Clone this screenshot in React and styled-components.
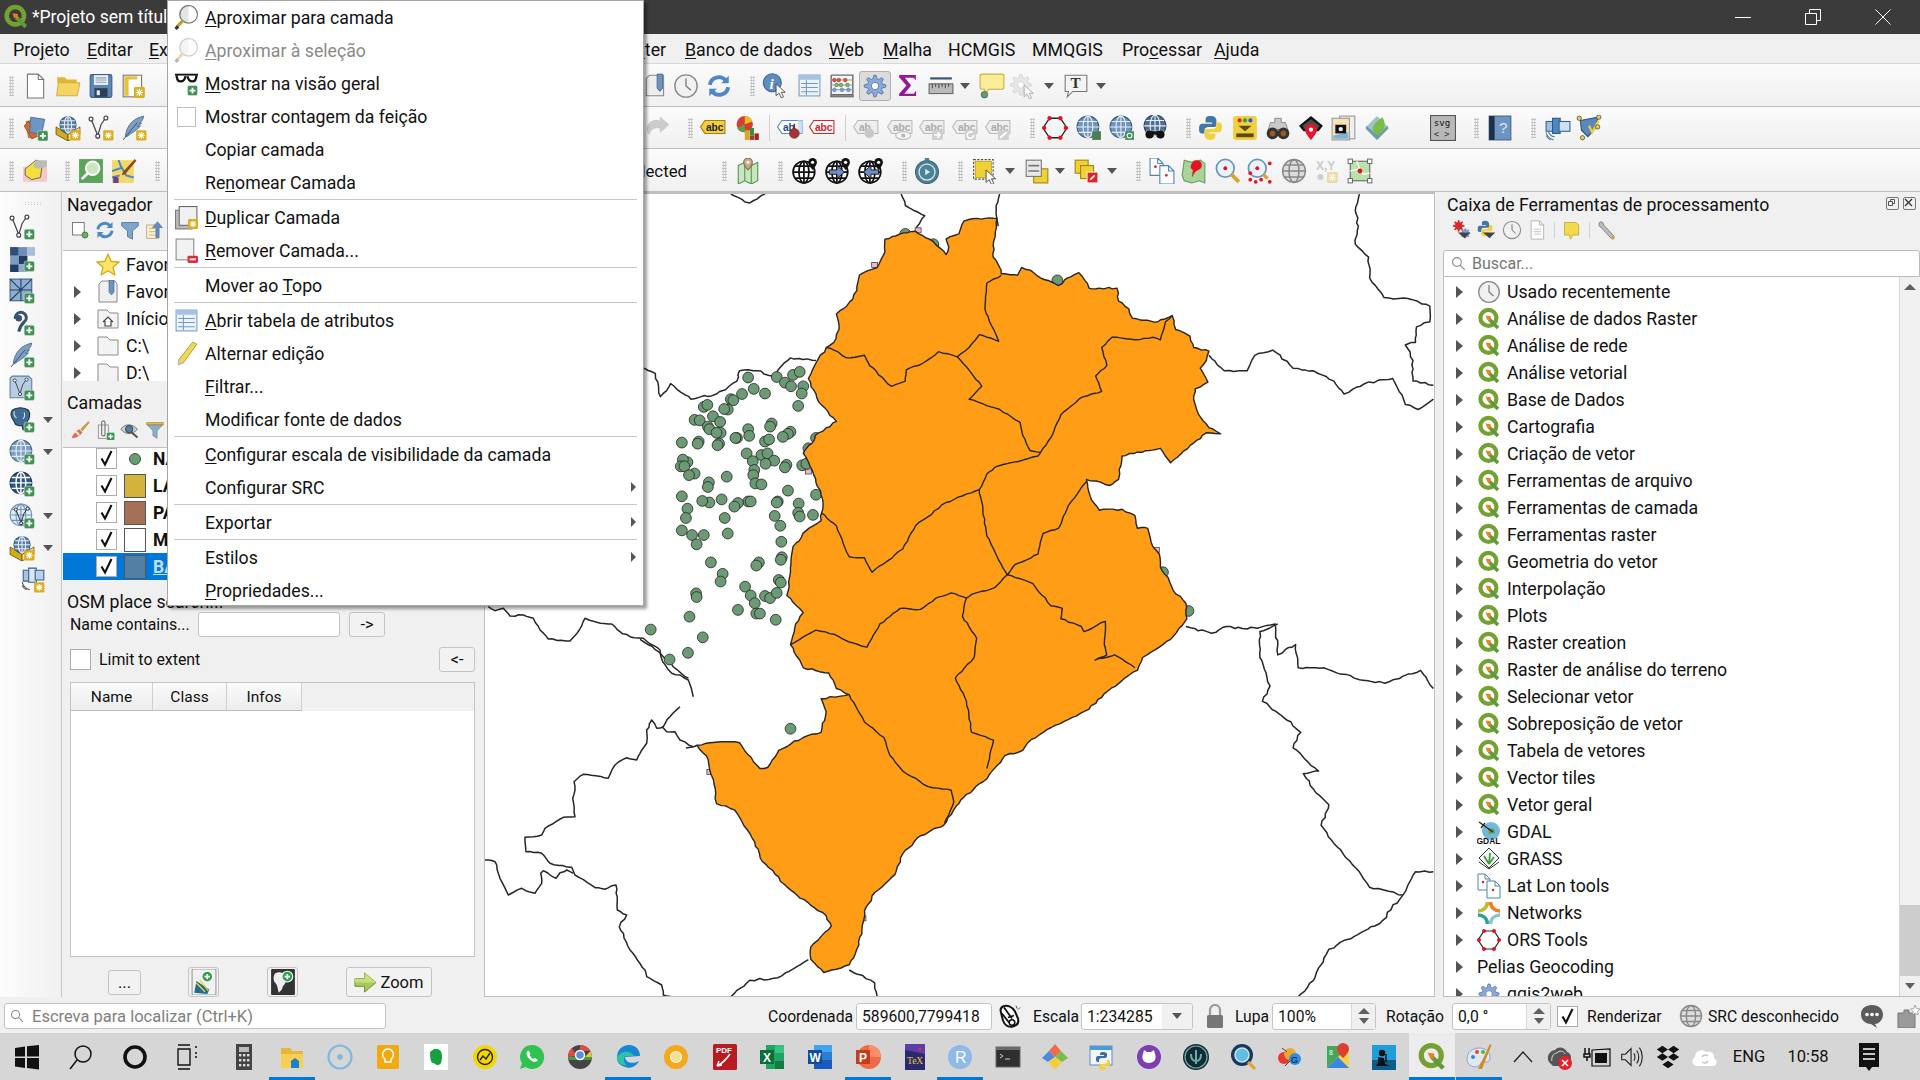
import React from 'react';
import styled, { createGlobalStyle } from 'styled-components';

const FONT = 'Roboto, "Noto Sans", Arial, sans-serif';
const Global = createGlobalStyle`
  html, body { margin: 0; padding: 0; background: #f0f0f0; }
  body { font-family: ${FONT}; font-size: 17.7px; color: #111; overflow: hidden; }
  u { text-underline-offset: 2px; text-decoration-thickness: 1px; }
`;

/* ---------- small svg parts ---------- */
const Plus = ({ x = 14, y = 14 }) => (
  <g>
    <rect x={x} y={y} width="9.5" height="9.5" rx="1.6" fill="#3f9156" stroke="#d9e9dc" strokeWidth=".5" />
    <path d={`M${x + 4.75} ${y + 2}v5.5M${x + 2} ${y + 4.75}h5.5`} stroke="#fff" strokeWidth="1.7" />
  </g>
);
const Ast = ({ x = 14, y = 14, s = 9.5 }) => (
  <g>
    <rect x={x} y={y} width={s} height={s} rx="1.2" fill="#dcae1e" />
    <path d={`M${x + s / 2} ${y + 1.6}v${s - 3.2}M${x + 1.6} ${y + s / 2}h${s - 3.2}M${x + 2.4} ${y + 2.4}l${s - 4.8} ${s - 4.8}M${x + s - 2.4} ${y + 2.4}l${-s + 4.8} ${s - 4.8}`} stroke="#fff" strokeWidth="1" />
  </g>
);
const Globe = ({ cx = 11, cy = 11, r = 9, fill = '#5b83ad', line = '#e8eef5', edge = '#3a5a7c', w = 1 }) => (
  <g>
    <circle cx={cx} cy={cy} r={r} fill={fill} stroke={edge} strokeWidth="1" />
    <ellipse cx={cx} cy={cy} rx={r * 0.45} ry={r} fill="none" stroke={line} strokeWidth={w} />
    <path d={`M${cx} ${cy - r}v${2 * r}M${cx - r} ${cy}h${2 * r}M${cx - r * 0.85} ${cy - r * 0.5}h${1.7 * r}M${cx - r * 0.85} ${cy + r * 0.5}h${1.7 * r}`} stroke={line} strokeWidth={w} fill="none" />
  </g>
);
const gearPath = (cx, cy, r1, r2, n = 8) => {
  let d = '';
  for (let i = 0; i < n * 4; i++) {
    const a = (i / (n * 4)) * Math.PI * 2 - Math.PI / (n * 4);
    const r = i % 4 === 0 || i % 4 === 1 ? r2 : r1;
    d += `${i ? 'L' : 'M'}${(cx + r * Math.cos(a)).toFixed(2)} ${(cy + r * Math.sin(a)).toFixed(2)}`;
  }
  return d + 'Z';
};
const Gear = ({ cx = 12, cy = 12, r1 = 7.5, r2 = 10.5, fill = '#8aa9d6', stroke = '#4d73ad', hole = 3.4 }) => (
  <g>
    <path d={gearPath(cx, cy, r1, r2)} fill={fill} stroke={stroke} strokeWidth=".8" strokeLinejoin="round" />
    <circle cx={cx} cy={cy} r={hole} fill="#fff" stroke={stroke} strokeWidth=".8" />
  </g>
);
const Qlogo = () => (
  <g>
    <circle cx="11.4" cy="10.8" r="8" fill="none" stroke="#75a133" strokeWidth="4.2" />
    <path d="M12 12l9 9" stroke="#5f9a3a" strokeWidth="3.6" />
    <path d="M8.6 8.6l5.2 .6-.6 5.2-1.6-2.2-1.1 1z" fill="#ef7d1a" />
  </g>
);
const Magnifier = ({ dim }) => (
  <g opacity={dim ? 0.35 : 1}>
    <circle cx="14" cy="9" r="8.400" fill="#e4e4e4" stroke="#777" strokeWidth="1.300" />
    <path d="M14 1.200a7.800 7.800 0 0 1 0 15.600z" fill="#fff" />
    <path d="M8.500 15L2.400 21.400" stroke="#c79a2e" strokeWidth="3" />
    <path d="M1.500 23l2.500-2.500" stroke="#333" strokeWidth="3" />
  </g>
);
const Page = ({ x = 5, y = 2, w = 14, h = 20, fill = '#fff', stroke = '#777' }) => (
  <path d={`M${x} ${y}h${w - 5}l5 5v${h - 5}h${-w}z M${x + w - 5} ${y}v5h5`} fill={fill} stroke={stroke} strokeWidth="1" strokeLinejoin="round" />
);
const ArrowRefresh = () => (
  <g fill="none" stroke="#4d86c9" strokeWidth="3.6">
    <path d="M3.5 11A8.5 8.5 0 0 1 18 6.5" />
    <path d="M20.5 13A8.5 8.5 0 0 1 6 17.5" />
    <path d="M21 2.5v7h-7z" fill="#4d86c9" stroke="none" />
    <path d="M3 21.5v-7h7z" fill="#4d86c9" stroke="none" />
  </g>
);
const LabelTag = ({ fill = '#f2cf3c', edge = '#a37f12', color = '#222', text = 'abc', opacity = 1 }) => (
  <g opacity={opacity}>
    <path d="M4.5 5H23V17H4.5L.5 11z" fill={fill} stroke={edge} strokeWidth="1" />
    <text x="5.5" y="15" fontFamily="Liberation Sans, sans-serif" fontWeight="700" fontSize="9.4" fill={color}>{text}</text>
  </g>
);
const Cursor = ({ x = 13, y = 11, s = 1 }) => (
  <path transform={`translate(${x} ${y}) scale(${s})`} d="M0 0l0 11 2.8-2.4 2 4.4 2-1-2-4.2h3.6z" fill="#fff" stroke="#444" strokeWidth=".8" />
);
const Vshape = ({ c = '#444' }) => (
  <g fill="none" stroke={c} strokeWidth="1.1">
    <path d="M3 4l6 15 3-10 4-6" />
    <circle cx="2.8" cy="3.8" r="1.8" fill="#fff" />
    <circle cx="9" cy="19.5" r="1.8" fill="#fff" />
    <circle cx="16.5" cy="2.8" r="1.8" fill="#fff" />
  </g>
);
const Feather = () => (
  <g>
    <path d="M21 1C12 3 5 9 4 20l2-.5C9 17 14 15 18 10l-3 .5 4-3-2 .3C19 6 20.5 4 21 1z" fill="#7d9fc2" stroke="#4a6d91" strokeWidth=".8" />
    <path d="M2 23L15 7" stroke="#33536f" strokeWidth=".9" />
  </g>
);
const Cube = () => (
  <g>
    <path d="M1 11l11 7v6L1 18z" fill="#d4ab1d" stroke="#6b5709" strokeWidth=".8" />
    <path d="M23 11l-11 7v6l11-6z" fill="#f0e38a" stroke="#6b5709" strokeWidth=".8" />
    <Globe cx={12} cy={9} r={7.5} fill="#5a7fa8" />
  </g>
);
const FolderGray = () => <path d="M2 3h9l3 3h8v15H2z" fill="#f3f3f3" stroke="#8c8c8c" />;
const Checker = () => (
  <g>
    {[[1, 1, '#2f4f7a'], [9, 1, '#6f8fb8'], [1, 9, '#7d9cc3'], [9, 9, '#223d60'], [17, 1, '#a9bdd6'], [1, 17, '#233f64'], [9, 17, '#8da8c9']].map(([x, y, c]) => (
      <rect key={`${x}${y}`} x={x} y={y} width="8" height="8" fill={c} />
    ))}
  </g>
);
function GlobeBlack() {
  return (
    <g fill="none" stroke="#111" strokeWidth="1.6">
      <circle cx="11" cy="13" r="10" fill="#fff" />
      <ellipse cx="11" cy="13" rx="4.6" ry="10" />
      <path d="M1 13h20M3 7.500h16M3 18.500h16M11 3v20" />
    </g>
  );
}
function Pin() {
  return (
    <g>
      <path d="M19 0a4 4 0 0 1 4 4c0 3-4 7-4 7s-4-4-4-7a4 4 0 0 1 4-4z" fill="#111" />
      <circle cx="19" cy="4" r="1.500" fill="#fff" />
    </g>
  );
}
const ico = {
  new: <Page x={5} y={1} w={15} h={22} />,
  open: (
    <g>
      <path d="M2 4h7l2 2h9v3H2z" fill="#e3b431" />
      <path d="M3 9h20l-2.5 12H1.5z" fill="#f4d564" stroke="#cfa52d" strokeWidth=".8" />
    </g>
  ),
  save: (
    <g>
      <rect x="2" y="1.5" width="20" height="21" rx="1.5" fill="#5c86b5" stroke="#3d6089" />
      <rect x="5.5" y="2" width="13" height="9" fill="#eef1f5" />
      <path d="M7 4.5h10M7 6.5h10M7 8.5h10" stroke="#8a9fb8" />
      <rect x="6" y="14" width="12" height="8" fill="#2d3f55" />
      <rect x="8" y="16" width="3" height="4.5" fill="#dfe6ee" />
    </g>
  ),
  layout: (
    <g>
      <rect x="2" y="2" width="17" height="20" fill="#fff" stroke="#777" />
      <path d="M3 3h12v3h-8v15H3z" fill="#e5c23d" />
      <Ast x={12} y={13} s={10} />
    </g>
  ),
  mark: (
    <g>
      <path d="M3 5l3-3h13v19H3z" fill="#eee" stroke="#888" />
      <path d="M13 1h5v13l-2.5 3-2.5-3z" fill="#6d92bd" stroke="#3f6288" strokeWidth=".7" />
    </g>
  ),
  clock: (
    <g>
      <circle cx="12" cy="12" r="10.3" fill="#f1f1f1" stroke="#8a8a8a" strokeWidth="1.3" />
      <path d="M12 5v7l4.5 4" fill="none" stroke="#777" strokeWidth="1.2" />
    </g>
  ),
  refresh: <ArrowRefresh />,
  identify: (
    <g>
      <circle cx="9.5" cy="9" r="8.3" fill="#5f8cc0" stroke="#3c6595" />
      <text x="7" y="14.5" fontFamily="Liberation Serif, serif" fontStyle="italic" fontWeight="700" fontSize="14" fill="#fff">i</text>
      <Cursor x={13} y={10} />
    </g>
  ),
  table: (
    <g>
      <rect x="2" y="2" width="20" height="20" fill="#eef3fa" stroke="#6f9ac9" />
      <rect x="2" y="2" width="20" height="4.5" fill="#a6c3e2" />
      <path d="M4 10h16M4 14h16M4 18h16M9 7v14" stroke="#6f9ac9" />
    </g>
  ),
  abacus: (
    <g fill="none">
      <path d="M2 2h20v19M2 2v19M2 20h20" stroke="#6b6b6b" strokeWidth="1.3" />
      <rect x="1" y="20.5" width="22" height="2" fill="#777" />
      <path d="M2 6.5h20M2 11h20M2 15.5h20" stroke="#999" />
      {[5, 9, 15].map((x) => <circle key={x} cx={x} cy="6.5" r="1.7" fill="#d9534f" stroke="#963a37" strokeWidth=".5" />)}
      {[7, 11, 17].map((x) => <circle key={x} cx={x} cy="11" r="1.7" fill="#7fb46a" stroke="#4a7d35" strokeWidth=".5" />)}
      {[5, 12, 18].map((x) => <circle key={x} cx={x} cy="15.5" r="1.7" fill="#7fa4d3" stroke="#44709f" strokeWidth=".5" />)}
    </g>
  ),
  gear: <Gear cx={12} cy={12} r1={6.8} r2={10} />,
  sigma: <path d="M4 2h16v5l-2.2-2.5H9.5l6 7.5-6.5 8h9l2.3-3v5H4v-2l7-8-7-8z" fill="#96189a" />,
  ruler: (
    <g>
      <path d="M2 5h20" stroke="#35567c" strokeWidth="2" />
      <rect x="1" y="10" width="22" height="9" fill="#bbb" stroke="#666" />
      <path d="M4 10v4M7 10v3M10 10v4M13 10v3M16 10v4M19 10v3" stroke="#555" />
    </g>
  ),
  tip: (
    <g>
      <path d="M3 1h18a2 2 0 0 1 2 2v10a2 2 0 0 1-2 2H9l-3 4-1-4H3a2 2 0 0 1-2-2V3a2 2 0 0 1 2-2z" fill="#faed99" stroke="#c9ae43" />
      <circle cx="5" cy="20" r="3" fill="#6b9a75" stroke="#3d5e44" strokeWidth=".7" />
    </g>
  ),
  ggear: (
    <g opacity=".45">
      <Gear cx={11} cy={11} r1={6.6} r2={9.6} fill="#d5d5d5" stroke="#aaa" hole={3.2} />
      <Cursor x={14} y={11} />
    </g>
  ),
  tbubble: (
    <g>
      <path d="M2 2h20v15H9l-5 5 1-5H2z" fill="#f4f4f4" stroke="#777" />
      <text x="7" y="14" fontFamily="Liberation Serif, serif" fontWeight="700" fontSize="14" fill="#333">T</text>
    </g>
  ),
  addlayer: (
    <g>
      <path d="M4 6l11-2 2 15-11 2z" fill="#df9136" stroke="#9a5b14" strokeWidth=".7" />
      <path d="M2 10l4-4 12 12-9 4z" fill="#d66a2e" stroke="#8d3c11" strokeWidth=".7" />
      <path d="M8 2l13 2-3 14-11-2z" fill="#6d96c4" stroke="#3e6592" strokeWidth=".7" />
      <Plus x={14.5} y={14.5} />
    </g>
  ),
  gpkg: <g><Cube /><Ast x={14} y={14} /></g>,
  vnew: <g><Vshape /><Ast x={14} y={14} /></g>,
  feather: <g><Feather /><Ast x={14} y={14} /></g>,
  layers2: (
    <g>
      <path d="M1 8h22v14H1z" fill="#f8c7c7" />
      <path d="M3 10l10-8 6 2-2 14-8 2-6-4z" fill="#f2e13a" stroke="#555" strokeWidth=".8" />
      <path d="M13 2l10 0v6l-8 2-5-2z" fill="#bbb" />
    </g>
  ),
  greensearch: (
    <g>
      <rect x="1" y="1" width="22" height="22" fill="#5aa55b" />
      <circle cx="13.5" cy="9.5" r="6.2" fill="#c8e6c0" stroke="#fff" strokeWidth="1.8" />
      <path d="M9 14l-5.5 5.5" stroke="#fff" strokeWidth="2.6" />
    </g>
  ),
  mapedit: (
    <g>
      <rect x="1" y="2" width="20" height="21" fill="#f3d768" />
      <path d="M1 12l9-3 4 7 7 2M7 2l3 8M1 18l7-2" stroke="#4a8bc2" strokeWidth="1.8" fill="none" />
      <path d="M2 17l5 1v5H2z" fill="#6d3f8f" />
      <path d="M22 1l1.5 1.5L13 15l-3 1 1-3z" fill="#8a4a1a" />
    </g>
  ),
  undo: <path d="M21 12a8 8 0 0 0-12-6V2L1 9l8 7v-4c5-1 9 1 10 6 2-2 2-4 2-6z" transform="matrix(-1 0 0 1 23 0)" fill="#ccc" stroke="#bbb" strokeWidth=".5" />,
  abcY: <LabelTag />,
  pie: (
    <g>
      <circle cx="9" cy="8.5" r="7.5" fill="#d93a32" />
      <path d="M9 8.5V1a7.5 7.5 0 0 1 7 5z" fill="#e8c127" />
      <path d="M9 8.5L2 12a7.5 7.5 0 0 0 7 4z" fill="#58a14e" />
      <rect x="9" y="14" width="4" height="9" fill="#d9a81d" />
      <rect x="13.5" y="19" width="4" height="4" fill="#b83028" />
      <rect x="18" y="17" width="4" height="6" fill="#a3241c" />
      <rect x="13.5" y="12" width="4" height="7" fill="#3c8a3a" />
    </g>
  ),
  abcB: (
    <g>
      <LabelTag fill="#fff" edge="#4d8fd0" text="ab" color="#2a4a70" />
      <rect x="19" y="5" width="4" height="12" fill="#cfe0f3" />
      <path d="M16 8v5" stroke="#7a2a2a" strokeWidth="1.5" />
      <circle cx="16" cy="17" r="4.5" fill="#a33636" stroke="#6e1f1f" strokeWidth=".6" />
    </g>
  ),
  abcR: <LabelTag fill="#fff" edge="#e01f1f" color="#d61b1b" />,
  gab1: (
    <g>
      <LabelTag fill="#eee" edge="#bbb" text="ab" color="#aaa" />
      <circle cx="15" cy="17" r="4.5" fill="#c8c8c8" />
    </g>
  ),
  gab2: (
    <g>
      <LabelTag fill="#eee" edge="#bbb" color="#aaa" />
      <ellipse cx="15" cy="19" rx="7" ry="3.6" fill="#f6f6f6" stroke="#bbb" />
      <circle cx="15" cy="19" r="2" fill="#bbb" />
    </g>
  ),
  gab3: (
    <g>
      <LabelTag fill="#eee" edge="#bbb" color="#aaa" />
      <rect x="12" y="14" width="10" height="9" fill="#cfcfcf" />
      <path d="M14 18.5h5M17 16l2.5 2.5-2.5 2.5" stroke="#fff" strokeWidth="1.5" fill="none" />
    </g>
  ),
  gab4: (
    <g>
      <LabelTag fill="#eee" edge="#bbb" color="#aaa" />
      <rect x="12" y="14" width="10" height="9" fill="#cfcfcf" />
      <path d="M20 18.5a3 3 0 1 1-1-2.2" stroke="#fff" strokeWidth="1.4" fill="none" />
    </g>
  ),
  gab5: (
    <g>
      <LabelTag fill="#eee" edge="#bbb" color="#aaa" />
      <rect x="12" y="14" width="10" height="9" fill="#cfcfcf" />
      <path d="M14 21l6-5" stroke="#fff" strokeWidth="1.8" />
    </g>
  ),
  ors: (
    <g>
      <path d="M7 3h10l6 9-6 9H7L1 12z" fill="none" stroke="#222" strokeWidth="1.2" />
      {[[7, 3], [17, 3], [22, 12], [17, 21], [7, 21], [2, 12]].map(([x, y]) => <circle key={`${x}${y}`} cx={x} cy={y} r="2" fill="#e3141c" />)}
    </g>
  ),
  g1: (
    <g>
      <Globe cx={11} cy={11} r={10} fill="#6f93bd" edge="#3b5e88" />
      <rect x="15" y="15" width="8" height="8" fill="#4c7d52" />
    </g>
  ),
  g2: (
    <g>
      <Globe cx={11} cy={11} r={10} fill="#6f93bd" edge="#3b5e88" />
      <rect x="15" y="15" width="8" height="8" fill="#3f9156" />
      <circle cx="19" cy="19" r="2.2" fill="none" stroke="#fff" />
    </g>
  ),
  g3: (
    <g>
      <Globe cx={12} cy={10} r={10} fill="#4f6f92" edge="#2b4360" />
      <circle cx="7" cy="18" r="3.8" fill="#111" />
      <circle cx="17" cy="18" r="3.8" fill="#111" />
      <rect x="9" y="15" width="6" height="3" fill="#111" />
    </g>
  ),
  python: (
    <g>
      <path d="M12 1c-5 0-5 2-5 4v2h6v1H4c-3 0-3 3-3 5s0 4 3 4h2v-3c0-2 2-3 4-3h5c2 0 2-2 2-3V5c0-2-2-4-5-4z" fill="#3f78a8" />
      <path d="M12 23c5 0 5-2 5-4v-2h-6v-1h9c3 0 3-3 3-5s0-4-3-4h-2v3c0 2-2 3-4 3H9c-2 0-2 2-2 3v3c0 2 2 4 5 4z" fill="#f5d13f" transform="translate(-1 0)" />
    </g>
  ),
  mmq: (
    <g>
      <rect x="1" y="1" width="22" height="22" rx="2.5" fill="#f0d042" />
      <circle cx="7" cy="5" r="1.9" fill="#d42a2a" />
      <circle cx="12" cy="5" r="1.9" fill="#2fa23a" />
      <circle cx="17" cy="5" r="1.9" fill="#2a55d4" />
      <path d="M6 10h12l-6 5z" fill="#5c4a12" />
      <rect x="4" y="17" width="16" height="3.5" fill="#5c4a12" />
    </g>
  ),
  binoc: (
    <g>
      <path d="M9 3h6v4h4l3 10H14l-2-4-2 4H2L5 7h4z" fill="#c9c9c9" stroke="#777" strokeWidth=".7" />
      <circle cx="7" cy="17" r="5.4" fill="#333" />
      <circle cx="17" cy="17" r="5.4" fill="#333" />
      <circle cx="7" cy="17" r="2.6" fill="#9a5a22" />
      <circle cx="17" cy="17" r="2.6" fill="#9a5a22" />
    </g>
  ),
  pinCloud: (
    <g>
      <path d="M12 1l11 9-4 5H5L1 10z" fill="#111" />
      <path d="M12 4l8 6-2 3H6l-2-3z" fill="#fff" opacity=".25" />
      <path d="M12 8a5.5 5.5 0 0 1 5.5 5.5C17.5 17 12 23 12 23S6.5 17 6.5 13.5A5.5 5.5 0 0 1 12 8z" fill="#e4142c" />
      <circle cx="12" cy="13.5" r="2" fill="#fff" />
    </g>
  ),
  camdoc: (
    <g>
      <rect x="8" y="1" width="14" height="21" fill="#eee" stroke="#999" />
      <rect x="1" y="3" width="16" height="20" fill="#f6e3b5" stroke="#999" />
      <path d="M2 19l14-3v6H2z" fill="#7ab4db" />
      <rect x="4" y="9" width="10" height="8" fill="#111" />
      <circle cx="9" cy="13" r="2" fill="#eee" />
    </g>
  ),
  leaf: (
    <g>
      <path d="M12 1l11 11-11 11L1 12z" fill="#9fc3c8" />
      <path d="M12 18L2 10v3l10 10 10-10v-3z" fill="#6c9ea6" />
      <path d="M13 18c-7-3-7-9 4-16 4 6 2 14-4 16z" fill="#7bbb4a" />
    </g>
  ),
  svg: (
    <g>
      <rect x=".5" y=".5" width="23" height="23" fill="#b8b8b8" stroke="#555" />
      <text x="3.5" y="10.5" fontFamily="DejaVu Sans Mono, monospace" fontSize="8.4" fill="#111">svg</text>
      <text x="3.5" y="20" fontFamily="DejaVu Sans Mono, monospace" fontSize="8" fill="#333">&lt; &gt;</text>
    </g>
  ),
  book: (
    <g>
      <rect x="2" y="1" width="20" height="22" fill="#6d94c2" stroke="#41658f" />
      <rect x="2" y="1" width="5" height="22" fill="#1f2f47" />
      <text x="11" y="17" fontFamily="Liberation Sans, sans-serif" fontSize="14" fill="#dfe9f5">?</text>
    </g>
  ),
  sat: (
    <g>
      <rect x="1" y="6" width="7" height="9" fill="#9cc0e2" stroke="#34638f" />
      <rect x="7" y="3" width="7" height="14" fill="#4d86c2" stroke="#2c5884" />
      <rect x="13" y="6" width="10" height="9" fill="#cfe0f2" stroke="#34638f" />
      <path d="M1 16c1 4 4 6 7 7M1 19c1 2 2 3 4 4M3 15c1 3 3 5 6 5" fill="none" stroke="#4d86a0" />
    </g>
  ),
  poly: (
    <g>
      <path d="M4 5l16-3-1 9-8 9-6-6z" fill="#5c88b7" stroke="#2d5580" />
      <path d="M12 10l3 6 6-11" fill="none" stroke="#f0d240" strokeWidth="2" />
      {[[3, 3], [21, 2], [6, 21], [20, 11]].map(([x, y]) => <rect key={`${x}`} x={x - 2} y={y - 2} width="4" height="4" rx="2" fill="#f0d240" stroke="#444" strokeWidth=".7" />)}
    </g>
  ),
  mapGreen: (
    <g>
      <path d="M3 7l6-3 6 3 6-3v17l-6 3-6-3-6 3z" fill="#c7e8bd" stroke="#5d8f5a" />
      <path d="M9 4v17M15 7v17" stroke="#5d8f5a" />
      <path d="M12 0a4 4 0 0 1 4 4c0 3-4 7-4 7s-4-4-4-7a4 4 0 0 1 4-4z" fill="#c9a98a" stroke="#8d6a44" />
      <circle cx="12" cy="4" r="1.4" fill="#fff" />
    </g>
  ),
  gb1: <g><GlobeBlack /><Pin /></g>,
  gb2: (
    <g>
      <GlobeBlack /><Pin />
      <path d="M4 11h7V7l7 6-7 6v-4H4z" fill="#6f8cc9" stroke="#111" strokeWidth=".8" />
    </g>
  ),
  gb3: (
    <g>
      <GlobeBlack /><Pin />
      <path d="M19 11h-7V7l-7 6 7 6v-4h7z" fill="#6f8cc9" stroke="#111" strokeWidth=".8" />
    </g>
  ),
  watch: (
    <g>
      <circle cx="12" cy="13" r="10.6" fill="#4d8196" stroke="#3b6678" />
      <circle cx="12" cy="13" r="7.4" fill="none" stroke="#d9e7ec" strokeWidth="1.2" />
      <rect x="10" y="0" width="4" height="2.6" fill="#4d8196" />
      <path d="M10.3 10v6l4.6-3z" fill="#d9e7ec" />
    </g>
  ),
  sel: (
    <g>
      <rect x="1.5" y="1.5" width="18" height="18" fill="none" stroke="#444" strokeDasharray="2 1.4" />
      <rect x="3" y="3" width="15" height="15" fill="#f0d133" stroke="#b2930f" strokeWidth=".6" />
      <Cursor x={13} y={11} s={1.05} />
    </g>
  ),
  formsel: (
    <g>
      <rect x="9" y="10" width="13" height="13" fill="#f0d133" stroke="#a08510" />
      <rect x="2" y="2" width="14" height="15" fill="#e8e8e8" stroke="#777" />
      <path d="M4 7h10M4 12h10" stroke="#777" strokeWidth="1.6" />
    </g>
  ),
  desel: (
    <g>
      <rect x="2" y="2" width="12" height="12" fill="#f0d133" stroke="#a08510" />
      <rect x="7" y="7" width="12" height="12" fill="#f0d133" stroke="#a08510" />
      <rect x="13" y="13" width="10" height="10" fill="#d9262c" stroke="#fff" strokeWidth=".8" />
      <path d="M16 20l4-4" stroke="#fff" strokeWidth="1.5" />
    </g>
  ),
  twopages: (
    <g>
      <Page x={1} y={0} w={12} h={16} stroke="#4d83b5" />
      <Page x={10} y={7} w={13} h={17} stroke="#4d83b5" />
      <circle cx="6" cy="8" r="1.2" fill="#e41a1a" />
      <circle cx="16" cy="16" r="1.2" fill="#e41a1a" />
    </g>
  ),
  mapPin: (
    <g>
      <path d="M3 2l7 2 8-2 4 3v18l-5-2-7 2-7-2-2-5z" fill="#a8d49a" stroke="#6a9960" />
      <path d="M14 2c4 0 6 3 5 6s-4 3-6 5l-3 5 1-7c-2-1-3-3-1-6 1-2 2-3 4-3z" fill="#e2141f" />
    </g>
  ),
  lensDot: (
    <g>
      <circle cx="9.5" cy="9.5" r="8.2" fill="#eaf2fb" stroke="#6e93bd" strokeWidth="1.6" />
      <circle cx="9.5" cy="9.5" r="1.8" fill="#e2141f" />
      <path d="M15 15l7 7" stroke="#d8a330" strokeWidth="3.5" />
    </g>
  ),
  lensDots: (
    <g>
      <circle cx="9.5" cy="9.5" r="8.2" fill="#eaf2fb" stroke="#6e93bd" strokeWidth="1.6" />
      <circle cx="9.5" cy="9.5" r="1.8" fill="#e2141f" />
      <path d="M15 15l4 4" stroke="#d8a330" strokeWidth="3" />
      {[[3, 20], [8, 22], [13, 20], [21, 22], [21, 5], [3, 14]].map(([x, y]) => <circle key={`${x}${y}`} cx={x} cy={y} r="1.7" fill="#e2141f" />)}
    </g>
  ),
  gridGlobe: (
    <g fill="none" stroke="#888" strokeWidth="1.4">
      <circle cx="12" cy="12" r="10.5" fill="#dcdcdc" />
      <ellipse cx="12" cy="12" rx="4.6" ry="10.5" />
      <path d="M1.5 12h21M3 6.5h18M3 17.5h18" />
    </g>
  ),
  xy: (
    <g opacity=".35">
      <text x="1" y="11" fontFamily="Liberation Sans, sans-serif" fontWeight="700" fontSize="11" fill="#777">X,Y</text>
      <circle cx="5" cy="17.5" r="2.8" fill="#888" />
      <Ast x={11} y={13} s={10} />
    </g>
  ),
  extent: (
    <g>
      <rect x="3" y="3" width="18" height="18" fill="#b9e3ab" stroke="#666" />
      <path d="M3 12l8-2 4 5 6-1M9 3l4 10" stroke="#fff" strokeWidth="1.2" fill="none" />
      <circle cx="12" cy="12" r="2.2" fill="#e2141f" />
      {[[1, 1], [19, 1], [1, 19], [19, 19]].map(([x, y]) => <rect key={`${x}${y}`} x={x} y={y} width="4" height="4" fill="#fff" stroke="#555" strokeWidth=".8" />)}
    </g>
  ),
  vplus: <g><Vshape /><Plus /></g>,
  rplus: <g><Checker /><Plus /></g>,
  meshplus: (
    <g>
      <rect x="1" y="1" width="20" height="20" fill="#8daecf" stroke="#3f6288" />
      <path d="M1 11h20M11 1v20M1 1l10 10M21 1L11 11M1 21l10-10" stroke="#1f3e5f" />
      <Plus />
    </g>
  ),
  hook: (
    <g>
      <path d="M6 8a5 5 0 1 1 8 3c-2 2-4 4-5 9" fill="none" stroke="#33536f" strokeWidth="2.8" />
      <circle cx="9" cy="7.5" r="3" fill="#33536f" />
      <Plus />
    </g>
  ),
  featherplus: <g><Feather /><Plus /></g>,
  vfile: (
    <g>
      <path d="M1 3l2-2h15l3 3v17H1z" fill="#b7cde3" stroke="#5d7fa3" />
      <g transform="translate(3 2) scale(.8)"><Vshape /></g>
      <Plus />
    </g>
  ),
  elephant: (
    <g>
      <path d="M3 3c4-3 11-3 15 0 2 3 1 8-1 10l-1 8h-3l-1-4c-3 1-4 0-6-1l-2-4C2 10 1 6 3 3z" fill="#3f6a93" stroke="#182e45" />
      <path d="M5 4c-1 2 0 5 2 6M14 5c1 3 0 5-1 6" fill="none" stroke="#cfe0f0" />
      <Plus />
    </g>
  ),
  wms: <g><Globe cx={11} cy={11} r={10} fill="#7da0c7" edge="#47698d" /><Plus /></g>,
  wcs: <g><Globe cx={11} cy={11} r={10} fill="#2f5683" edge="#1a3555" line="#fff" w={1.3} /><Plus /></g>,
  wfs: (
    <g>
      <Globe cx={11} cy={11} r={10} fill="#e3ecf6" edge="#6d94bd" line="#6d94bd" />
      <g transform="translate(4 3) scale(.8)"><Vshape c="#222" /></g>
      <Plus />
    </g>
  ),
  gpkgLeft: <g><Cube /><Ast x={14} y={14} /></g>,
  satStar: <g><g transform="translate(0 -1)"><path d="M3 4h6v10H3z" fill="#a8c4e0" stroke="#34638f" /><path d="M8 2h7v13H8z" fill="#d8e5f2" stroke="#34638f" /><path d="M14 4h8v9h-8z" fill="#b9cfe5" stroke="#34638f" /><path d="M2 15c1 4 3 6 7 7M2 18c1 2 2 3 4 4" fill="none" stroke="#555" /></g><Ast x={13} y={14} /></g>,
  brNew: (
    <g>
      <rect x="3" y="3" width="14" height="15" fill="#fff" stroke="#666" />
      <circle cx="18" cy="18" r="3.6" fill="#6fae60" stroke="#3c7231" />
    </g>
  ),
  funnel: <path d="M2 3h20v4l-7 6v10l-6-3v-7L2 7z" fill="#7ea5cc" stroke="#4c7398" />,
  funnelY: (
    <g>
      <path d="M2 3h20v3H2z" fill="#e5b93a" stroke="#a38214" strokeWidth=".7" />
      <path d="M3 6h18l-6.5 7v9l-5-3v-6z" fill="#8daec9" stroke="#5b7a94" strokeWidth=".7" />
    </g>
  ),
  collapse: (
    <g>
      <rect x="2" y="6" width="14" height="16" fill="#f7f0d8" stroke="#bd9f61" />
      <path d="M5 10h8M5 14h8M5 18h8" stroke="#c9a868" />
      <path d="M15 2l6 7h-4v12h-4V9H9z" fill="#5d8fc4" stroke="#3a6593" strokeWidth=".6" />
    </g>
  ),
  brush: (
    <g>
      <path d="M4 22c4-1 8-3 11-7l-4-4c-4 2-7 6-9 10z" fill="#e56b52" />
      <path d="M6 13l5 5" stroke="#e8e8e8" strokeWidth="2.5" />
      <path d="M13 11l9-9 1 1-8 10z" fill="#e0a43b" stroke="#8a6115" strokeWidth=".6" />
    </g>
  ),
  clip: (
    <g>
      <rect x="4" y="6" width="12" height="16" fill="#f2f2f2" stroke="#888" />
      <rect x="8" y="1" width="4" height="18" rx="2" fill="none" stroke="#777" strokeWidth="1.4" />
      <Plus x={14} y={15} />
    </g>
  ),
  eye: (
    <g>
      <path d="M1 11c5-7 13-7 20 0-6 7-15 7-20 0z" fill="#cfcfcf" stroke="#666" />
      <circle cx="11" cy="11" r="4.4" fill="#4e7fa6" stroke="#333" />
      <path d="M14 15l7 6" stroke="#555" strokeWidth="2.6" />
    </g>
  ),
  star: <path d="M12 1l3.1 7.4 8 .6-6.1 5.2 1.9 7.8L12 17.8 5.1 22 7 14.2.9 9l8-.6z" fill="#ffe26b" stroke="#d3ab12" strokeWidth="1.3" strokeLinejoin="round" />,
  favBook: (
    <g>
      <path d="M3 4l3-3h13l2 3v18H3z" fill="#f0f0f0" stroke="#888" />
      <path d="M13 0h5v12l-2.5 3-2.5-3z" fill="#6d92bd" stroke="#3f6288" strokeWidth=".6" />
    </g>
  ),
  home: (
    <g>
      <FolderGray />
      <path d="M7 15l5-5 5 5M9 14v5h6v-5" fill="#fff" stroke="#444" strokeWidth="1.2" />
    </g>
  ),
  folder: <FolderGray />,
  zoomSel: <Magnifier />,
  zoomSelD: <Magnifier dim />,
  overview: (
    <g>
      <path d="M1 3.500h22" stroke="#111" strokeWidth="1.800" />
      <path d="M2.500 4c0 3 .5 6 4 6s4-2.500 4.500-5M13 5c.5 2.500 1 5 4.500 5s4-3 4-6" fill="none" stroke="#111" strokeWidth="2.200" />
      <Plus x={13} y={14} />
    </g>
  ),
  dup: (
    <g>
      <rect x="1.5" y="5" width="16" height="18" fill="#bbb" stroke="#777" />
      <rect x="5" y="1.5" width="17" height="18" fill="#f0f0f0" stroke="#666" />
      <Ast x={13.5} y={13.5} />
    </g>
  ),
  rem: (
    <g>
      <rect x="2" y="1" width="17" height="20" fill="#f2f2f2" stroke="#888" />
      <rect x="13" y="17" width="10" height="7" rx="1.4" fill="#dd2b3c" />
      <path d="M15 20.5h6" stroke="#fff" strokeWidth="1.8" />
    </g>
  ),
  pencil: (
    <g>
      <path d="M18 1l4 2L9 21l-5 2 .5-5z" fill="#f0d655" stroke="#a9932e" strokeWidth=".8" />
      <path d="M4.5 18L4 23l5-2z" fill="#c9c9c9" />
    </g>
  ),
  mapPlus: (
    <g>
      <rect x="1" y="0" width="22" height="24" rx="1" fill="#f1f1f1" stroke="#999" />
      <path d="M3 22l2-11 12 8-2 4z" fill="#1d6f8a" />
      <path d="M5 13l8 8M8 10l8 10" stroke="#f0d042" strokeWidth="1.3" />
      <circle cx="15" cy="7" r="5" fill="#2f9e48" stroke="#fff" />
      <path d="M15 4.5v5M12.5 7h5" stroke="#fff" strokeWidth="1.5" />
    </g>
  ),
  africaPlus: (
    <g>
      <rect x="1" y="0" width="22" height="24" rx="1" fill="#333" />
      <path d="M4 5c3-3 7-2 10 0l1 5c0 4-3 4-4 9l-3 3c-1-4-1-7-3-9-2-2-2-6-1-8z" fill="#eee" />
      <circle cx="16" cy="7" r="5" fill="#2f9e48" stroke="#fff" />
      <path d="M16 4.5v5M13.5 7h5" stroke="#fff" strokeWidth="1.5" />
    </g>
  ),
  zoomArrow: (
    <g>
      <path d="M1 8h10V2l12 10-12 10v-6H1z" fill="#a5c95c" stroke="#6f9131" />
      <path d="M1 8h10V2l12 10H1z" fill="#c9df7e" />
    </g>
  ),
  lensGray: (
    <g fill="none" stroke="#8c8c8c" strokeWidth="1.8">
      <circle cx="9.5" cy="9.5" r="7" />
      <path d="M14.5 14.5L22 22" />
    </g>
  ),
  gdal: (
    <g>
      <circle cx="14" cy="11" r="9" fill="#73b7dc" />
      <path d="M11 8l6 1 1 4-6 1z" fill="#6c9b3d" />
      <path d="M2 2l14 10M4 8l4-5" stroke="#222" strokeWidth="1.3" />
      <text x="-.5" y="23.5" fontFamily="Liberation Sans, sans-serif" fontWeight="700" fontSize="8.6" fill="#111" textLength="24" lengthAdjust="spacingAndGlyphs">GDAL</text>
    </g>
  ),
  grass: (
    <g>
      <path d="M12 1l10 10-10 10L2 11z" fill="#f5f5f5" stroke="#333" />
      <path d="M12 17L7 9M12 17l1-11M12 17l5-7" stroke="#3c9c3b" strokeWidth="1.7" fill="none" />
      <path d="M2 15l10 7 10-7" fill="none" stroke="#333" />
    </g>
  ),
  networks: (
    <g fill="none" strokeWidth="3.600">
      <path d="M1 10c5 0 9-3 9.500-9" stroke="#c5b92e" />
      <path d="M23 10c-5 0-9-3-9.500-9" stroke="#ef7f22" />
      <path d="M1 14c5 0 9 3 9.500 9" stroke="#2f9f9b" />
      <path d="M23 14c-5 0-9 3-9.500 9" stroke="#89c5d4" />
    </g>
  ),
  mouse: (
    <g>
      <path d="M5 2c4-2 9 0 12 5l3 7c1 4-1 7-5 8s-8-1-10-6L3 8C2 5 3 3 5 2z" fill="#fff" stroke="#111" strokeWidth="2" />
      <path d="M6 3l8 11M4 9l7 9M16 11l-6 2" stroke="#111" strokeWidth="1.8" />
      <circle cx="14" cy="18" r="2.8" fill="none" stroke="#111" strokeWidth="1.6" />
      <path d="M18 1l1 3M22 3l-2 2" stroke="#555" />
    </g>
  ),
  lock: (
    <g>
      <path d="M7 11V6a5 5 0 0 1 10 0v5" fill="none" stroke="#9a9a9a" strokeWidth="2.2" />
      <rect x="4" y="11" width="16" height="13" rx="1.5" fill="#767676" />
    </g>
  ),
  chat: (
    <g>
      <path d="M12 1c6.500 0 11 4 11 9.500S18.500 20 15 20l2 4-6-4c-5 0-10-3.500-10-9.500S5.500 1 12 1z" fill="#5c5c5c" />
      <circle cx="7" cy="10.500" r="1.800" fill="#fff" /><circle cx="12" cy="10.500" r="1.800" fill="#fff" /><circle cx="17" cy="10.500" r="1.800" fill="#fff" />
    </g>
  ),
  plugin: (
    <g>
      <path d="M1 9h6V6h5v3h6v15H1z" fill="#9a9a9a" stroke="#777" />
      <path d="M18 1l1.500 3.500 3.500.5-2.500 2.500.7 3.500-2.700-1.800-3 1.800.7-3.500L13.500 5l3.300-.5z" fill="#fff" stroke="#888" strokeWidth=".7" />
    </g>
  ),
};

const Ico = ({ n, s = 24, children }) => (
  <svg width={s} height={s} viewBox="0 0 24 24">{n ? ico[n] : children}</svg>
);
const Logo = ({ s = 24 }) => <Ico s={s}><Qlogo /></Ico>;

/* ---------- frame ---------- */
const Screen = styled.div`
  position: relative; width: 1920px; height: 1080px; overflow: hidden;
  display: flex; flex-direction: column; background: #f0f0f0;
`;
const TitleBar = styled.div`
  flex: none; height: 34px; background: #3b3b3b; color: #fff; display: flex; align-items: center;
  font-size: 17.5px; padding-left: 3px;
`;
const TitleText = styled.span`margin-left: 3px; flex: 1;`;
const WinBtn = styled.div`
  flex: none; width: 70px; height: 34px; display: flex; align-items: center; justify-content: center;
  &:last-child { margin-right: 2px; }
`;
const MenuBar = styled.div`
  flex: none; height: 30px; background: #f0f0f0; border-bottom: 1px solid #d8d8d8; box-sizing: border-box; padding-top: 1px;
  display: flex; align-items: center; padding-left: 13px; font-size: 17.8px;
`;
const MenuEntry = styled.div`flex: none; width: ${(p) => p.$w}px; white-space: nowrap;`;
const ToolRow = styled.div`
  flex: none; height: ${(p) => p.$h}px; box-sizing: border-box; display: flex; align-items: center; padding-top: 1px;
  background: linear-gradient(#fbfbfb, #f0f0f0); border-bottom: 1px solid #bdbdbd;
`;
const Cell = styled.div`
  flex: none; width: ${(p) => p.$w}px; margin-left: ${(p) => p.$gap}px; display: flex; align-items: center; justify-content: center;
  ${(p) => p.$active && 'height: 30px; background: #dcdcdc; border: 1px solid #b0b0b0; border-radius: 3px; box-sizing: border-box;'}
`;
const Grip = styled.div`
  width: 5px; height: 20px;
  background-image: radial-gradient(#bdbdbd 0.8px, transparent 1px);
  background-size: 2.500px 3px;
`;
const GripH = styled.div`
  width: 17px; height: 5px;
  background-image: radial-gradient(#bdbdbd 0.8px, transparent 1px);
  background-size: 3px 2.500px;
`;
const Caret = styled.div`
  width: 0; height: 0; border-left: 5.500px solid transparent; border-right: 5.500px solid transparent;
  border-top: 6px solid ${(p) => p.$c || '#555'};
`;
const Sep = styled.div`width: 1px; height: 26px; background: #d0d0d0;`;
const SepMini = styled.div`width: 1px; height: 16px; margin: 0 2px; background: #d0d0d0; flex: none;`;
const RowText = styled.div`display: flex; justify-content: flex-end; white-space: nowrap; width: 100%; font-size: 16.800px;`;

const widthOf = (k) => (k === '|' ? 6 : k === 'v' ? 14 : k === 's' ? 2 : k === 'T' ? 90 : 28);
function Strip({ items }) {
  let cur = 0;
  return items.map(([x, k, active]) => {
    const w = active ? 32 : widthOf(k);
    const gap = x - w / 2 - cur;
    cur = x + w / 2;
    return (
      <Cell key={`${x}${k}`} $w={w} $gap={gap} $active={active}>
        {k === '|' ? <Grip /> : k === 'v' ? <Caret /> : k === 's' ? <Sep /> : k === 'T' ? <RowText>No Layer Selected</RowText> : <Ico n={k} s={k === 'sigma' || k === 'table' ? 25 : 26} />}
      </Cell>
    );
  });
}

const row1 = [[11, '|'], [35, 'new'], [68, 'open'], [101, 'save'], [134, 'layout'], [656, 'mark'], [686, 'clock'], [719, 'refresh'], [752, '|'], [775, 'identify'], [809, 'table'], [842, 'abacus'], [875, 'gear', true], [907, 'sigma'], [941, 'ruler'], [965, 'v'], [992, 'tip'], [1022, 'ggear'], [1049, 'v'], [1076, 'tbubble'], [1101, 'v']];
const row2 = [[11, '|'], [35, 'addlayer'], [68, 'gpkg'], [101, 'vnew'], [134, 'feather'], [658, 'undo'], [690, '|'], [713, 'abcY'], [748, 'pie'], [769, 's'], [790, 'abcB'], [822, 'abcR'], [845, 's'], [866, 'gab1'], [900, 'gab2'], [932, 'gab3'], [965, 'gab4'], [998, 'gab5'], [1032, '|'], [1055, 'ors'], [1089, 'g1'], [1122, 'g2'], [1155, 'g3'], [1188, '|'], [1211, 'python'], [1245, 'mmq'], [1278, 'binoc'], [1311, 'pinCloud'], [1344, 'camdoc'], [1377, 'leaf'], [1443, 'svg'], [1476, '|'], [1500, 'book'], [1533, '|'], [1558, 'sat'], [1589, 'poly']];
const row3 = [[11, '|'], [35, 'layers2'], [67, '|'], [91, 'greensearch'], [124, 'mapedit'], [157, '|'], [642, 'T'], [724, '|'], [748, 'mapGreen'], [780, '|'], [805, 'gb1'], [838, 'gb2'], [871, 'gb3'], [904, '|'], [927, 'watch'], [960, '|'], [985, 'sel'], [1010, 'v'], [1037, 'formsel'], [1060, 'v'], [1086, 'desel'], [1112, 'v'], [1138, '|'], [1162, 'twopages'], [1194, 'mapPin'], [1228, 'lensDot'], [1260, 'lensDots'], [1294, 'gridGlobe'], [1328, 'xy'], [1360, 'extent']];

/* ---------- workspace ---------- */
const Workspace = styled.div`flex: none; height: 805px; display: flex;`;
const LeftBar = styled.div`
  flex: none; width: 62px; box-sizing: border-box; border-right: 1px solid #c8c8c8;
  background: linear-gradient(90deg, #fdfdfd, #f0f0f0); display: flex; flex-direction: column; align-items: flex-start;
`;
const LeftGrip = styled.div`margin: 9px 0 5px 24px;`;
const LeftItem = styled.div`
  flex: none; height: 32.100px; display: flex; align-items: center; gap: 8px; padding-left: ${(p) => p.$pl || 9}px;
`;
const LeftDock = styled.div`flex: none; width: 422px; background: #f0f0f0; display: flex; flex-direction: column;`;
const DockTitle = styled.div`
  flex: none; height: ${(p) => p.$h || 24}px; margin-top: ${(p) => p.$mt || 0}px; padding: 2px 0 0 5px; box-sizing: border-box; display: flex; align-items: center;
  white-space: nowrap;
`;
const DockTools = styled.div`
  flex: none; height: ${(p) => p.$h || 27}px; margin-bottom: ${(p) => p.$mb ?? 7}px; display: flex; align-items: center; gap: ${(p) => p.$gap || 5}px; padding-left: ${(p) => p.$pl || 8}px;
`;
const TreeBox = styled.div`
  flex: none; height: ${(p) => p.$h}px; background: #fff; margin-left: 1px; overflow: hidden; border-top: 1px solid #c0c0c0; box-sizing: border-box;
`;
const LayerList = styled.div`margin-top: -3px;`;
const TreeRow = styled.div`
  height: 27px; display: flex; align-items: center; white-space: nowrap; ${(p) => p.$sel && 'background: #0078d7;'}
`;
const Tri = styled.div`
  width: 0; height: 0; border-top: 6px solid transparent; border-bottom: 6px solid transparent; border-left: 7px solid #555;
  visibility: ${(p) => (p.$hide ? 'hidden' : 'visible')}; flex: none;
`;
const BrowserIndent = styled.div`padding-left: 11px; width: 11px; flex: none; display: flex;`;
const BrowserIcon = styled.div`margin-left: 11px; margin-right: 6px; display: flex; flex: none;`;
const CheckBox = styled.div`
  flex: none; width: 21px; height: 21px; background: #fff; border: 1px solid #adadad; box-sizing: border-box;
  display: flex; align-items: center; justify-content: center; margin-left: ${(p) => p.$ml || 0}px;
`;
const Swatch = styled.div`
  flex: none; width: 22px; height: 24px; margin-left: 7px; background: ${(p) => p.$c}; border: 1px solid #555; box-sizing: border-box;
`;
const Dot = styled.div`
  flex: none; width: 12px; height: 12px; margin: 0 5px 0 12px; border-radius: 50%; background: #6b9a75; border: 1px solid #3d4f40; box-sizing: border-box;
`;
const LayerName = styled.span`
  margin-left: 7px; font-weight: 700; font-size: 17.500px; color: ${(p) => (p.$sel ? '#bfe0ff' : '#111')}; ${(p) => p.$sel && 'text-decoration: underline;'}
`;
const OsmRow = styled.div`flex: none; display: flex; align-items: center; height: ${(p) => p.$h}px; margin-top: ${(p) => p.$mt || 0}px; padding-left: 8px;`;
const TextField = styled.div`
  flex: none; width: ${(p) => p.$w}px; height: 25px; margin-left: ${(p) => p.$ml || 0}px; background: #fff; border: 1px solid #c4c4c4; border-radius: 3px; box-sizing: border-box;
`;
const PushBtn = styled.div`
  flex: none; width: ${(p) => p.$w}px; height: ${(p) => p.$h || 25}px; margin-left: ${(p) => p.$ml || 0}px; box-sizing: border-box;
  background: #f2f2f2; border: 1px solid #c4c4c4; border-radius: 3px; display: flex; align-items: center; justify-content: center; gap: 3px; font-size: 16.500px;
`;
const OsmLabel = styled.span`flex: none; width: ${(p) => p.$w}px; margin-left: ${(p) => p.$ml || 0}px; white-space: nowrap; font-size: 15.900px;`;
const ResultTable = styled.div`
  flex: none; height: 275px; margin: 10px 0 0 8px; width: 405px; border: 1px solid #c4c4c4; box-sizing: border-box; display: flex; flex-direction: column; background: #fff;
`;
const THead = styled.div`flex: none; height: 28px; display: flex; background: #f0f0f0;`;
const THCell = styled.div`
  flex: none; width: ${(p) => p.$w}px; box-sizing: border-box; display: flex; align-items: center; justify-content: center; font-size: 15.500px;
  background: linear-gradient(#fbfbfb, #ececec); border-right: 1px solid #cfcfcf; border-bottom: 1px solid #bdbdbd;
`;
const FootRow = styled.div`flex: none; display: flex; align-items: center; height: 30px; margin-top: 10px;`;

const MapBox = styled.div`
  flex: none; width: 951px; box-sizing: border-box; border: 1px solid #bfbfbf; border-top-width: 2px; background: #fff; overflow: hidden; display: flex;
`;
const RightDock = styled.div`flex: 1; min-width: 0; display: flex; flex-direction: column; background: #f0f0f0;`;
const RDTitle = styled.div`
  flex: none; height: 24px; box-sizing: border-box; padding-top: 2px; display: flex; align-items: center; padding-left: 12px; white-space: nowrap;
`;
const RDTitleText = styled.span`flex: 1;`;
const MiniBtn = styled.div`
  flex: none; width: 11px; height: 11px; border: 1px solid #777; border-radius: 2px; margin-right: 4px; margin-top: -4px; display: flex;
`;
const SearchBox = styled.div`
  flex: none; height: 27px; margin-left: 8px; box-sizing: border-box; background: #fff; border: 1px solid #bcbcbc; border-radius: 3px 3px 0 0;
  display: flex; align-items: center; gap: 6px; padding-left: 7px; color: #757575; font-size: 16px;
`;
const ProcTree = styled.div`
  flex: 1; min-height: 0; margin-left: 8px; display: flex; background: #fff; border-left: 1px solid #c0c0c0; border-bottom: 1px solid #bfbfbf; overflow: hidden;
`;
const ProcList = styled.div`flex: 1; overflow: hidden; padding-top: 1px;`;
const ProcRow = styled.div`height: 27px; display: flex; align-items: center; white-space: nowrap; padding-left: 12px;`;
const ProcIcon = styled.div`flex: none; width: 24px; margin: 0 6px 0 14px; display: flex; justify-content: center;`;
const ProcPlain = styled.span`margin-left: 14px;`;
const VScroll = styled.div`flex: none; width: 21px; display: flex; flex-direction: column; background: #f0f0f0; border-left: 1px solid #d8d8d8; box-sizing: border-box;`;
const ScrollArrow = styled.div`flex: none; height: 20px; display: flex; align-items: center; justify-content: center;`;
const CaretUp = styled.div`width: 0; height: 0; border-left: 6px solid transparent; border-right: 6px solid transparent; border-bottom: 6px solid #606060;`;
const ScrollTrack = styled.div`flex: 1; display: flex; flex-direction: column; justify-content: flex-end;`;
const ScrollThumb = styled.div`height: 71px; background: #cdcdcd;`;

/* ---------- status & taskbar ---------- */
const StatusBar = styled.div`flex: none; height: 36px; box-sizing: border-box; padding-top: 2px; background: #f0f0f0; display: flex; align-items: center; font-size: 15.700px;`;
const Locator = styled.div`
  flex: none; width: 382px; height: 26px; margin-left: 4px; background: #fff; border: 1px solid #c4c4c4; border-radius: 3px; box-sizing: border-box;
  display: flex; align-items: center; gap: 8px; padding-left: 5px; color: #808080; font-size: 16.500px; white-space: nowrap;
`;
const StatLabel = styled.div`flex: none; width: ${(p) => p.$w}px; margin-left: ${(p) => p.$ml || 0}px; white-space: nowrap;`;
const StatField = styled.div`
  flex: none; width: ${(p) => p.$w}px; height: 27px; margin-left: ${(p) => p.$ml || 0}px; background: #fff; border: 1px solid #c4c4c4; border-radius: 3px; box-sizing: border-box;
  display: flex; align-items: center; padding-left: 5px; white-space: nowrap;
`;
const StatFieldText = styled.span`flex: 1;`;
const ComboBtn = styled.div`flex: none; width: 30px; height: 25px; background: #f0f0f0; display: flex; align-items: center; justify-content: center; border-radius: 0 3px 3px 0;`;
const SpinBtns = styled.div`flex: none; width: 23px; height: 25px; background: #f0f0f0; border-left: 1px solid #d8d8d8; display: flex; flex-direction: column; align-items: center; justify-content: space-evenly;`;
const IconSlot = styled.div`flex: none; width: 24px; margin-left: ${(p) => p.$ml || 0}px; display: flex; justify-content: center;`;

const TaskBar = styled.div`flex: none; height: 47px; background: #d6d6d6; display: flex; align-items: stretch;`;
const TaskCell = styled.div`
  flex: none; width: ${(p) => p.$w}px; margin-left: ${(p) => p.$gap}px; display: flex; align-items: center; justify-content: center; position: relative;
  font-size: 16.500px; ${(p) => p.$on && 'background: #ececec;'}
`;
const TaskMark = styled.div`position: absolute; left: ${(p) => p.$l || 0}px; right: ${(p) => p.$r || 0}px; bottom: 0; height: 3px; background: #0078d7;`;

/* ---------- context menu ---------- */
const CtxMenu = styled.div`
  position: absolute; left: 167px; top: 0; width: 477px; height: 606px; box-sizing: border-box;
  background: #fff; border: 1px solid #a6a6a6; box-shadow: 3px 3px 3px rgba(0, 0, 0, 0.38); font-size: 17.700px;
`;
const CtxItem = styled.div`
  height: 33px; display: flex; align-items: center; position: relative; color: ${(p) => (p.$off ? '#8a8a8a' : '#111')}; white-space: nowrap;
`;
const CtxIcon = styled.div`flex: none; width: 37px; display: flex; align-items: center; justify-content: center;`;
const CtxBox = styled.div`width: 19px; height: 20px; background: #fff; border: 1px solid #bdbdbd; box-sizing: border-box;`;
const CtxSep = styled.div`height: 2px; margin: 0 6px; border-top: 1px solid #c6c6c6; box-sizing: border-box;`;
const CtxArrow = styled.div`
  position: absolute; right: 7px; top: 11px; width: 0; height: 0; border-top: 5.500px solid transparent; border-bottom: 5.500px solid transparent; border-left: 5.500px solid #555;
`;

/* ---------- map ---------- */
const Z7 = (a) => [a[0] / 1.96 + 155, a[1] / 1.936 - 4];
const Z9 = (a) => [a[0] / 3 - 5, a[1] / 3 + 396];
const rough = (pts, seed = 1, amp = 1.1) => {
  let s = seed;
  const rnd = () => { s = (s * 9301 + 49297) % 233280; return s / 233280 - 0.5; };
  const out = [];
  pts.forEach((p, i) => {
    out.push(p);
    const q = pts[i + 1];
    if (!q) return;
    const d = Math.hypot(q[0] - p[0], q[1] - p[1]);
    const n = Math.floor(d / 5);
    for (let k = 1; k <= n; k++) {
      const t = k / (n + 1);
      out.push([p[0] + (q[0] - p[0]) * t + rnd() * amp * 2, p[1] + (q[1] - p[1]) * t + rnd() * amp * 2]);
    }
  });
  return out.map((p) => `${p[0].toFixed(1)},${p[1].toFixed(1)}`).join(' ');
};
const chunk = (a) => { const o = []; for (let i = 0; i < a.length; i += 2) o.push([a[i], a[i + 1]]); return o; };
const P7 = (a) => chunk(a).map(Z7);
const P9 = (a) => chunk(a).map(Z9);

const outer = P7([700,55,693,100,692,130,705,150,708,162,740,165,748,150,765,155,785,170,820,185,838,170,860,160,872,175,880,190,900,190,935,190,938,215,958,230,965,248,985,252,1015,255,1043,243,1050,270,1078,283,1085,305,1115,312,1110,330,1098,345,1113,372,1088,385,1085,405,1095,435,1115,460,1138,472,1110,470,1085,490,1040,528,1020,500,990,505,960,510,945,515,938,560,920,572,875,560,885,600,900,620,945,618,970,630,975,655,995,655,1005,690,1018,705,1020,730,1035,750,1045,775,1070,800,1072,830,1040,870,1010,890,985,905,975,930,950,945,910,975,880,1005,840,1025,790,1050,760,1070,750,1085,715,1095,690,1125,680,1140,640,1170,615,1200,595,1230,550,1250,515,1285,500,1325,460,1360,440,1395,435,1440,425,1470,410,1500,360,1515,335,1490,335,1465,375,1425,365,1405,335,1385,295,1355,265,1325,240,1300,220,1255,185,1200,150,1188,145,1150,130,1095,112,1075,165,1068,195,1070,235,1120,250,1118,272,1085,320,1060,355,1050,365,1010,355,985,410,977,385,965,370,935,320,925,295,880,305,840,320,818,288,785,295,740,300,690,325,660,355,640,358,600,340,550,320,510,350,470,385,448,350,410,330,365,345,335,365,305,380,295,390,270,385,240,405,225,425,195,430,165,465,150,480,120,480,95,510,85,540,80,575,100,600,125,605,110,600,95,625,85,635,60,660,55,700,55]);
const inner = [
  [708,165,680,180,676,230,703,293,680,285,665,280,645,305,622,323,585,313,555,335,522,348,520,370,493,380,450,340,440,320,405,325,380,310,365,305],
  [622,323,670,380,645,405,705,425,745,450,750,475,765,505,785,508],
  [1043,243,1030,255,1020,290,1005,285,970,290,925,285,905,305,915,340,893,360,905,390,885,395,860,405,825,435,805,480,787,505,780,515,695,537,680,550,665,580,600,605,540,650,515,695,455,740,440,712,410,710,385,650,355,625],
  [665,580,672,620,680,670,700,710,720,745,695,770,650,783,640,790,610,780,580,790,550,812,510,810,470,840,445,885,410,875,380,860,345,852,295,880],
  [875,565,840,610,820,655,790,665,780,705,735,725,720,745,770,762,805,805,828,810,825,830,865,845,870,855,912,835,910,880,915,900,892,910,930,900,970,925],
  [640,790,632,825,660,868,655,905,618,945,640,990,650,1050,693,1065,680,1120],
  [410,977,440,1030,478,1060,490,1095,515,1125,565,1155,610,1162,615,1185,597,1225],
].map(P7);
const lines = [
  [178,8,215,25,245,8],
  [512,8,520,30,558,50,540,80],
  [705,8,698,30,702,70],
  [1410,8,1402,40,1408,70,1402,105,1428,130,1430,170,1458,208,1505,210,1548,225,1548,255,1522,265,1520,295,1500,300,1515,330,1515,370,1555,378],
  [1115,320,1145,350,1190,350,1205,320,1240,310,1280,345,1320,350,1360,370,1380,395,1420,375,1475,365,1500,415,1525,425,1555,405],
  [8,345,30,355,40,400,60,375,100,405,150,395,190,370,195,350,230,350,260,360,295,325,345,330],
  [1070,845,1120,858,1150,845,1190,850,1245,840,1250,900,1285,880,1290,925,1340,925,1400,945,1460,955,1530,930,1555,965],
  [1250,840,1215,855,1215,905,1235,960,1220,990,1260,1020,1295,1050,1280,1080,1330,1125,1300,1130,1320,1160,1350,1190,1335,1230,1360,1265,1410,1320,1430,1350,1495,1365,1520,1320,1555,1320],
  [1495,1365,1450,1420,1400,1445,1350,1470,1335,1500,1320,1530,1290,1562],
  [178,1562,215,1530,270,1525,330,1490],
  [410,1510,460,1535,465,1562],
  [0,870,30,890,80,935,95,945],
  [90,1080,112,1075],
].map(P7);
const westLines = [
  [25,50,45,62,70,55,90,78,130,75,160,85,180,120,205,147,270,153,298,120,315,85,350,97,395,102,420,125,450,140,490,145,540,180,548,215,575,250,600,255,625,270,640,320],
  [600,350,570,380,550,410,530,415,515,390,500,420,500,460,480,490,470,510,440,503,405,525,385,565,310,553,282,575,285,600,278,625,285,680,250,682,195,715,185,735,160,740,135,742,138,785,185,790,210,820,275,832,285,855,345,893,375,898,408,885,412,960,440,975,418,1010,450,1080,495,1140,500,1160,545,1185,550,1215,575,1220],
  [545,410,560,425,585,425,600,450,640,470],
  [15,810,45,815,55,850,85,915,125,895,165,910,185,880,182,850,190,842,228,865,240,848,260,840,280,850],
].map(P9);
const dots = chunk([212,363,268,362,300,358,313,352,284,373,296,380,320,380,317,394,223,385,200,395,245,394,178,405,183,407,125,420,132,416,172,425,165,424,310,418,107,445,117,446,143,438,157,449,133,458,136,463,158,470,150,470,258,452,255,458,295,468,290,472,280,478,212,463,214,476,190,480,187,480,245,487,253,483,82,489,115,487,113,491,155,491,152,494,209,510,238,513,250,510,263,524,246,530,221,525,287,532,284,537,318,533,326,530,93,527,84,522,80,535,87,535,107,549,96,552,170,555,224,542,222,552,226,568,238,570,135,566,133,575,290,582,345,590,82,593,136,605,122,602,160,599,212,603,217,603,192,606,185,613,270,603,268,605,311,607,310,625,313,632,339,629,93,617,90,635,166,635,264,631,275,650,82,659,102,668,125,668,172,665,111,686,277,681,278,711,276,716,139,721,233,721,228,727,162,743,158,758,272,755,276,760,206,768,110,781,111,788,217,785,245,786,255,790,268,780,225,800,192,813,228,820,235,820,266,832,97,826,123,866,94,896,58,909,21,851,295,1043,1075,815,1025,740,818,175,575,105,520,85,345,480,330,500]).map(Z7);
const pink = chunk([460,145,545,78,137,1127,330,545,1012,697,437,1410]).map(Z7);

const MapDrawing = () => (
  <svg width="949" height="803" viewBox="0 0 949 803">
    <g fill="none" stroke="#262626" strokeWidth="1.5" strokeLinejoin="round">
      {lines.map((l, i) => <polyline key={i} points={rough(l, i + 7)} />)}
      {westLines.map((l, i) => <polyline key={i} points={rough(l, i + 31, 0.7)} />)}
    </g>
    {pink.map(([x, y], i) => <rect key={i} x={x - 3} y={y - 2.500} width="6" height="5" fill="#f0b6c4" stroke="#333" strokeWidth=".7" />)}
    {dots.map(([x, y], i) => <circle key={i} cx={x} cy={y} r="5.400" fill="#6b9a75" stroke="#232323" strokeWidth=".8" />)}
    <polygon points={rough(outer, 3, 0.9)} fill="#ff9d17" stroke="#262626" strokeWidth="1.4" strokeLinejoin="round" />
    <g fill="none" stroke="#262626" strokeWidth="1.4" strokeLinejoin="round">
      {inner.map((l, i) => <polyline key={i} points={rough(l, i + 17, 0.6)} />)}
    </g>
  </svg>
);

/* ---------- data ---------- */
const procItems = [
  ['clock', 'Usado recentemente'], ['q', 'Análise de dados Raster'], ['q', 'Análise de rede'], ['q', 'Análise vetorial'], ['q', 'Base de Dados'],
  ['q', 'Cartografia'], ['q', 'Criação de vetor'], ['q', 'Ferramentas de arquivo'], ['q', 'Ferramentas de camada'], ['q', 'Ferramentas raster'],
  ['q', 'Geometria do vetor'], ['q', 'Interpolação'], ['q', 'Plots'], ['q', 'Raster creation'], ['q', 'Raster de análise do terreno'],
  ['q', 'Selecionar vetor'], ['q', 'Sobreposição de vetor'], ['q', 'Tabela de vetores'], ['q', 'Vector tiles'], ['q', 'Vetor geral'],
  ['gdal', 'GDAL'], ['grass', 'GRASS'], ['twopages', 'Lat Lon tools'], ['networks', 'Networks'], ['ors', 'ORS Tools'], [null, 'Pelias Geocoding'], ['gear', 'qgis2web'],
];
const menuEntries = [
  [13, <>Pro<u>j</u>eto</>], [87, <><u>E</u>ditar</>], [149, <><u>E</u>xibir</>], [220, <><u>C</u>amada</>], [300, <>C<u>o</u>nfigurações</>], [440, <>Co<u>m</u>plementos</>], [560, <>Vetor</>], [615, <>Ra<u>s</u>ter</>],
  [685, <><u>B</u>anco de dados</>], [829, <><u>W</u>eb</>], [883, <><u>M</u>alha</>], [948, 'HCMGIS'], [1032, 'MMQGIS'], [1122, <>Pro<u>c</u>essar</>], [1214, <><u>A</u>juda</>],
];
const ctx = [
  ['zoomSel', <><u>A</u>proximar para camada</>], ['zoomSelD', <><u>A</u>proximar à seleção</>, 'off'], ['overview', <><u>M</u>ostrar na visão geral</>],
  ['box', 'Mostrar contagem da feição'], [null, 'Copiar camada'], [null, <>Re<u>n</u>omear Camada</>], 's',
  ['dup', <><u>D</u>uplicar Camada</>], ['rem', <><u>R</u>emover Camada...</>], 's', [null, <>Mover ao <u>T</u>opo</>], 's',
  ['table', <><u>A</u>brir tabela de atributos</>], ['pencil', 'Alternar edição'], [null, <><u>F</u>iltrar...</>], [null, 'Modificar fonte de dados'], 's',
  [null, <><u>C</u>onfigurar escala de visibilidade da camada</>], [null, 'Configurar SRC', 'sub'], 's', [null, 'Exportar', 'sub'], 's', [null, 'Estilos', 'sub'], [null, <><u>P</u>ropriedades...</>],
];

const leftTools = [['vplus'], ['rplus'], ['meshplus'], ['hook'], ['featherplus'], ['vfile'], ['elephant', 1], ['wms', 1], ['wcs'], ['wfs', 1], ['gpkgLeft', 1], ['satStar', 0, 20]];

const T = (p) => <svg width={p.s || 30} height={p.s || 30} viewBox="0 0 30 30">{p.children}</svg>;
const task = {
  win: <g fill="#111"><path d="M3 6l10-1.500v10H3zM15 4.200L27 3v11.500H15zM3 16h10v10L3 24.500zM15 16h12v11.500L15 26z" /></g>,
  search: <g fill="none" stroke="#111" strokeWidth="1.500"><circle cx="17" cy="12" r="8" /><path d="M11 18L4 27" /></g>,
  cort: <circle cx="15" cy="15" r="10" fill="none" stroke="#111" strokeWidth="3.600" />,
  view: <g fill="none" stroke="#111" strokeWidth="1.400"><path d="M5 3h12M5 27h12M5 7h12v16H5zM22 5h2M22 11h2M22 15h2" /></g>,
  calc: <g><rect x="7" y="2" width="16" height="26" fill="#444" /><rect x="10" y="5" width="10" height="5" fill="#bbb" />{[13, 18, 23].map((y) => [11, 15, 19].map((x) => <rect key={`${x}${y}`} x={x - 1} y={y - 1} width="2.400" height="2.400" fill="#ddd" />))}</g>,
  folder: <g><path d="M4 6h9l2 3h11v6H4z" fill="#e8b43a" /><path d="M4 12h22v14H4z" fill="#f6cf55" /><path d="M14 26v-7l4-3 4 3v7z" fill="#1b7fd0" /></g>,
  ring: <g fill="none"><circle cx="15" cy="15" r="11.500" stroke="#7fb9e0" strokeWidth="2.200" /><circle cx="15" cy="15" r="2.800" fill="#7fb9e0" /></g>,
  lamp: <g><rect x="4" y="3" width="22" height="24" rx="2" fill="#f0a90f" /><path d="M15 7a5.500 5.500 0 0 1 3 10v3h-6v-3a5.500 5.500 0 0 1 3-10z" fill="none" stroke="#fff" strokeWidth="1.400" /></g>,
  ever: <g><rect x="3" y="2" width="24" height="26" fill="#fff" /><path d="M9 10l4-3 3 0c3 0 5 3 5 7 0 5-1 9-4 9s-3-2-5-2-3-4-3-11z" fill="#16a03e" /></g>,
  yellow: <g><circle cx="15" cy="15" r="12" fill="#f4d600" /><circle cx="15" cy="15" r="7.500" fill="none" stroke="#222" strokeWidth="1.400" /><path d="M10 18l3-4 3 3 4-6" fill="none" stroke="#222" strokeWidth="1.400" /></g>,
  whats: <g><path d="M15 3a12 12 0 1 1-6.500 22L3 27l2-5.500A12 12 0 0 1 15 3z" fill="#2fc24f" /><path d="M10.500 9c-2 2-.5 6 2.500 8.500s6 3.500 8 .5l-3-2-1.500 1c-2-1-3-2.500-4-4l1-1.500-2-3z" fill="#fff" /></g>,
  chrome: <g><circle cx="15" cy="15" r="12" fill="#444" /><path d="M15 3a12 12 0 0 1 10.400 6H15z" fill="#e14b3f" /><path d="M3 15a12 12 0 0 1 4-9l5 8z" fill="#e14b3f" /><path d="M25.400 9A12 12 0 0 1 27 15h-7z" fill="#f0c330" /><path d="M3 15l24 0-1 3H4z" fill="#3ba14a" /><circle cx="15" cy="13" r="4.500" fill="#5a8ee0" stroke="#fff" strokeWidth="1.500" /></g>,
  edge: <g><path d="M4 16C4 8 9 3 16 3c7 0 11 5 11 11l-15 1c0 5 7 8 14 4-3 6-9 8-14 6S4 21 4 16z" fill="#1987d0" /><path d="M4 16C6 9 17 7 21 14h-9c-2 3-1 7 2 10-5-1-10-3-10-8z" fill="#2cc3a8" /></g>,
  chromeY: <g><circle cx="15" cy="15" r="12" fill="#f5a81c" /><circle cx="15" cy="15" r="5.500" fill="#fbe08b" stroke="#fff" strokeWidth="1.200" /></g>,
  pdf: <g><rect x="3" y="2" width="24" height="26" rx="1.500" fill="#b71c23" /><text x="6" y="11" fontFamily="Liberation Sans, sans-serif" fontWeight="700" fontSize="8" fill="#fff">PDF</text><path d="M7 24c6-3 9-6 13-12M7 24l2-5M7 24l5-1" stroke="#fff" strokeWidth="1.500" fill="none" /></g>,
  xl: <g><path d="M9 3h18v24H9z" fill="#21a366" /><path d="M18 3h9v8h-9z" fill="#33c481" /><path d="M18 19h9v8h-9z" fill="#107c41" /><rect x="3" y="8" width="14" height="14" fill="#0c6f3b" /><text x="6" y="19.500" fontFamily="Liberation Sans, sans-serif" fontWeight="700" fontSize="12" fill="#fff">X</text></g>,
  wd: <g><path d="M9 3h18v24H9z" fill="#2b7cd3" /><path d="M9 3h18v7H9z" fill="#41a5ee" /><path d="M9 18h18v9H9z" fill="#185abd" /><rect x="3" y="8" width="14" height="14" fill="#114d9e" /><text x="4.500" y="19.500" fontFamily="Liberation Sans, sans-serif" fontWeight="700" fontSize="12" fill="#fff">W</text></g>,
  pp: <g><circle cx="16" cy="15" r="12" fill="#ed6c47" /><path d="M16 3a12 12 0 0 1 12 12H16z" fill="#ff8f6b" /><rect x="3" y="8" width="14" height="14" fill="#c43e1c" /><text x="6" y="19.500" fontFamily="Liberation Sans, sans-serif" fontWeight="700" fontSize="12" fill="#fff">P</text></g>,
  tex: <g><rect x="5" y="2" width="20" height="26" fill="#2b2a6b" /><path d="M5 2h20v10L5 8z" fill="#5a3fa8" /><circle cx="20" cy="7" r="1.500" fill="#e33" /><text x="7" y="22" fontFamily="Liberation Serif, serif" fontSize="9.500" fill="#e8c24a">TeX</text></g>,
  r: <g><circle cx="15" cy="15" r="12" fill="#8fb9e8" /><text x="10" y="21" fontFamily="Liberation Sans, sans-serif" fontSize="16" fill="#fff">R</text></g>,
  cmd: <g><rect x="3" y="5" width="24" height="20" fill="#2f2f2f" stroke="#666" /><path d="M3 5h24v3H3z" fill="#6a6a6a" /><path d="M7 12l3 2-3 2M12 17h5" stroke="#ccc" fill="none" /></g>,
  gems: <g><path d="M15 2l6 7-6 6-6-6z" fill="#ef6c4a" /><path d="M21 9l7 7-6 4-7-5z" fill="#7cba4f" /><path d="M9 9L2 16l6 4 7-5z" fill="#4b8ae0" /><path d="M8 20l7-5 7 5-7 8z" fill="#f2cd40" /></g>,
  pywin: <g><rect x="3" y="4" width="22" height="19" fill="#f4f4f4" stroke="#5b8fc4" /><path d="M3 4h22v4H3z" fill="#4d9ad6" /><path d="M16 10c-3 0-3 1.500-3 3h4v1h-6c-2 0-2 2-2 3s0 3 2 3h1v-2c0-1 1-2 3-2h3c1 0 2-1 2-2v-2c0-1-1-2-4-2z" fill="#356fa3" /><path d="M16 28c3 0 3-1.500 3-3h-4v-1h6c2 0 2-2 2-3s0-3-2-3h-1v2c0 1-1 2-3 2h-3c-1 0-2 1-2 2v2c0 1 1 2 4 2z" fill="#f3cd42" /></g>,
  cat: <g><circle cx="15" cy="15" r="12" fill="#7c3fb2" /><path d="M9 12l1-4 3 2h4l3-2 1 4c2 5-1 9-6 9s-8-4-6-9z" fill="#fff" /></g>,
  keg: <g><circle cx="15" cy="15" r="13" fill="#172733" /><path d="M15 4a11 11 0 0 1 0 22 11 11 0 0 1 0-22z" fill="none" stroke="#5fb3a8" strokeWidth="1.200" /><path d="M15 8v14M10 12c0 5 2 7 5 7s5-2 5-7" stroke="#5fb3a8" strokeWidth="2" fill="none" /></g>,
  lens: <g><circle cx="14" cy="13" r="11" fill="#123a63" /><circle cx="14" cy="13" r="7" fill="#5ec0e8" stroke="#ddd" strokeWidth="1.500" /><path d="M20 20l7 7" stroke="#e0a32a" strokeWidth="3" /></g>,
  rainbow: <g><circle cx="8" cy="16" r="6" fill="#e6392f" /><circle cx="14" cy="12" r="6" fill="#f0a72a" /><circle cx="19" cy="17" r="6" fill="#2f8fe0" /><path d="M6 6l5 4M9 24l5-5" stroke="#444" /><text x="15" y="21" fontFamily="Liberation Sans, sans-serif" fontSize="9" fill="#111">G</text></g>,
  maps: <g><path d="M4 4h22v22H4z" fill="#47a65b" /><path d="M4 26L26 4v22z" fill="#f5d24b" /><path d="M15 15l11 11H4z" fill="#3a86e0" /><path d="M20 1a6 6 0 0 1 6 6c0 4-6 9-6 9s-6-5-6-9a6 6 0 0 1 6-6z" fill="#dc3f32" /><text x="6" y="13" fontFamily="Liberation Sans, sans-serif" fontSize="7" fill="#fff">8</text></g>,
  kindle: <g><rect x="3" y="3" width="24" height="25" fill="#1e9dd9" /><path d="M3 18h24v10H3z" fill="#0c5d88" /><circle cx="13" cy="11" r="3.200" fill="#111" /><path d="M9 15l6 1 1 6 5 2H7l2-3z" fill="#111" /><path d="M17 12v8" stroke="#111" strokeWidth="1.500" /></g>,
  paint: <g><path d="M3 17c0-7 6-11 12-11s11 3 11 9-4 5-7 5-3 5-7 5-9-2-9-8z" fill="#dfe7f2" stroke="#8ea7c4" /><circle cx="9" cy="15" r="2" fill="#3b82d6" /><circle cx="13" cy="10" r="2" fill="#e2443a" /><circle cx="19" cy="10" r="2" fill="#5ab34a" /><path d="M14 27L26 2l1.500 1L18 27z" fill="#d18a1f" /></g>,
  chev: <path d="M6 20l9-10 9 10" fill="none" stroke="#222" strokeWidth="1.300" />,
  cloudx: <g><path d="M4 20c-3-5 0-11 6-12 3-4 10-3 12 2 4 1 5 6 3 9l-3 5H8z" fill="#555" /><path d="M7 19c-1-3 1-8 5-8 2-3 7-2 8 1" fill="none" stroke="#ddd" /><circle cx="20" cy="21" r="7" fill="#e3222c" /><path d="M17 18l6 6M23 18l-6 6" stroke="#fff" strokeWidth="1.500" /></g>,
  power: <g><path d="M3 6v6M7 6v6M2 12h6v3H2zM5 15v4" stroke="#111" strokeWidth="1.500" fill="none" /><path d="M10 8l18-1v17H10z" fill="none" stroke="#111" strokeWidth="1.200" /><path d="M13 11h12v10H13z" fill="#111" /></g>,
  vol: <g fill="none" stroke="#222" strokeWidth="1.200"><path d="M4 12h4l6-6v18l-6-6H4z" /><path d="M17 11c1.500 2 1.500 6 0 8M20 8c3 4 3 10 0 14M23 5c4 6 4 14 0 20" /></g>,
  drop: <path d="M9 3l6 4-6 4-6-4zM21 3l6 4-6 4-6-4zM9 11l6 4-6 4-6-4zM21 11l6 4-6 4-6-4zM15 19l6 4-6 4-6-4z" fill="#111" />,
  cloud: <g><path d="M7 24c-5 0-6-7-2-9 0-6 7-9 11-5 5-2 9 2 8 6 4 2 3 8-1 8z" fill="#fff" /><path d="M12 15a4 4 0 0 1 6-1M18 19a4 4 0 0 1-6 1" stroke="#c8c8c8" strokeWidth="1.600" fill="none" /></g>,
  note: <g><path d="M5 1h20v24h-7l-3 4-3-4H5z" fill="#111" /><path d="M9 7h12M9 12h12M9 17h12" stroke="#fff" strokeWidth="1.300" /></g>,
};
const taskCells = [
  [27, 'win'], [81, 'search'], [135, 'cort'], [188, 'view'], [244, 'calc'], [292, 'folder', 'm'], [340, 'ring'], [388, 'lamp'], [436, 'ever'], [485, 'yellow'], [532, 'whats'], [580, 'chrome'], [628, 'edge', 'm'], [676, 'chromeY'], [725, 'pdf'], [772, 'xl'], [820, 'wd'], [868, 'pp', 'm'], [915, 'tex'], [960, 'r', 'm'], [1008, 'cmd'], [1055, 'gems'], [1102, 'pywin'], [1149, 'cat'], [1196, 'keg'], [1243, 'lens'], [1291, 'rainbow'], [1338, 'maps'], [1384, 'kindle'], [1431.5, 'Q'], [1478.5, 'paint', 'm'],
];
const tray = [[1523, 'chev', 30], [1560, 'cloudx', 30], [1597, 'power', 30], [1632, 'vol', 28], [1668, 'drop', 28], [1705, 'cloud', 30]];

const Spin = ({ w, ml, children }) => (
  <StatField $w={w} $ml={ml}>
    <StatFieldText>{children}</StatFieldText>
    <SpinBtns><CaretUp /><Caret $c="#606060" /></SpinBtns>
  </StatField>
);

function Tick() {
  return <svg width="15" height="17" viewBox="0 0 15 17"><path d="M2.500 8.500l3.500 6 6.500-13.500" fill="none" stroke="#111" strokeWidth="2.100" /></svg>;
}

export default function App() {
  const wMenu = (i) => (menuEntries[i + 1] ? menuEntries[i + 1][0] - menuEntries[i][0] : 120);
  let taskCur = 0;
  const cellFor = (x, w) => { const g = x - w / 2 - taskCur; taskCur = x + w / 2; return g; };
  return (
    <Screen>
      <Global />
      <TitleBar>
        <Logo s={26} />
        <TitleText>*Projeto sem título — QGIS</TitleText>
        <WinBtn><svg width="16" height="16"><path d="M0 8.500h16" stroke="#fff" /></svg></WinBtn>
        <WinBtn><svg width="16" height="16"><path d="M.5 4.500h11v11H.5zM4.500 4.500V.5h11v11h-4" fill="none" stroke="#fff" /></svg></WinBtn>
        <WinBtn><svg width="16" height="16"><path d="M.5.5l15 15M15.500.5l-15 15" stroke="#fff" /></svg></WinBtn>
      </TitleBar>
      <MenuBar>
        {menuEntries.map((m, i) => <MenuEntry key={m[0]} $w={wMenu(i)}>{m[1]}</MenuEntry>)}
      </MenuBar>
      <ToolRow $h={43}><Strip items={row1} /></ToolRow>
      <ToolRow $h={42}><Strip items={row2} /></ToolRow>
      <ToolRow $h={43}><Strip items={row3} /></ToolRow>
      <Workspace>
        <LeftBar>
          <LeftGrip><GripH /></LeftGrip>
          {leftTools.map(([n, arrow, pl]) => (
            <LeftItem key={n} $pl={pl}>
              <Ico n={n} s={26} />
              {arrow ? <Caret /> : null}
            </LeftItem>
          ))}
        </LeftBar>
        <LeftDock>
          <DockTitle>Navegador</DockTitle>
          <DockTools>
            {['brNew', 'refresh', 'funnel', 'collapse'].map((n) => <Ico key={n} n={n} s={20} />)}
          </DockTools>
          <TreeBox $h={131}>
            {[['star', 'Favoritos', true], ['favBook', 'Favoritos espaciais'], ['home', 'Início'], ['folder', 'C:\\'], ['folder', 'D:\\']].map(([ic, t, noTri]) => (
              <TreeRow key={t}>
                <BrowserIndent><Tri $hide={noTri} /></BrowserIndent>
                <BrowserIcon><Ico n={ic} s={24} /></BrowserIcon>
                <span>{t}</span>
              </TreeRow>
            ))}
          </TreeBox>
          <DockTitle $mt={9}>Camadas</DockTitle>
          <DockTools $h={32} $mb={1}>
            {['brush', 'clip', 'eye', 'funnelY'].map((n) => <Ico key={n} n={n} s={20} />)}
          </DockTools>
          <TreeBox $h={133}>
            <LayerList>
              <TreeRow><CheckBox $ml={33}><Tick /></CheckBox><Dot /><LayerName>NASCENTES</LayerName></TreeRow>
              <TreeRow><CheckBox $ml={33}><Tick /></CheckBox><Swatch $c="#d4b33d" /><LayerName>LAGOS</LayerName></TreeRow>
              <TreeRow><CheckBox $ml={33}><Tick /></CheckBox><Swatch $c="#a56f58" /><LayerName>PARQUES</LayerName></TreeRow>
              <TreeRow><CheckBox $ml={33}><Tick /></CheckBox><Swatch $c="#fff" /><LayerName>MUNICÍPIOS</LayerName></TreeRow>
              <TreeRow $sel><CheckBox $ml={33}><Tick /></CheckBox><Swatch $c="#527fa3" /><LayerName $sel>BACIAS</LayerName></TreeRow>
            </LayerList>
          </TreeBox>
          <DockTitle $mt={9} $h={23}>OSM place search...</DockTitle>
          <OsmRow $h={25}>
            <OsmLabel $w={128}>Name contains...</OsmLabel>
            <TextField $w={142} />
            <PushBtn $w={36} $ml={9}>-&gt;</PushBtn>
          </OsmRow>
          <OsmRow $h={25} $mt={10}>
            <CheckBox />
            <OsmLabel $w={340} $ml={8}>Limit to extent</OsmLabel>
            <PushBtn $w={36}>&lt;-</PushBtn>
          </OsmRow>
          <ResultTable>
            <THead>
              <THCell $w={82}>Name</THCell>
              <THCell $w={74}>Class</THCell>
              <THCell $w={75}>Infos</THCell>
            </THead>
          </ResultTable>
          <FootRow>
            <PushBtn $w={33} $ml={46}>...</PushBtn>
            <PushBtn $w={31} $h={30} $ml={47}><Ico n="mapPlus" s={26} /></PushBtn>
            <PushBtn $w={31} $h={30} $ml={48}><Ico n="africaPlus" s={26} /></PushBtn>
            <PushBtn $w={86} $h={30} $ml={48}><Ico n="zoomArrow" s={23} />Zoom</PushBtn>
          </FootRow>
        </LeftDock>
        <MapBox><MapDrawing /></MapBox>
        <RightDock>
          <RDTitle>
            <RDTitleText>Caixa de Ferramentas de processamento</RDTitleText>
            <MiniBtn><svg width="9" height="9"><path d="M1.500 3.500h4v4h-4zM3.500 3.500v-2h4v4h-2" fill="none" stroke="#555" /></svg></MiniBtn>
            <MiniBtn><svg width="9" height="9"><path d="M1 1l7 7M8 1L1 8" stroke="#333" strokeWidth="1.300" /></svg></MiniBtn>
          </RDTitle>
          <DockTools $pl={17}>
            <Ico s={20}><path d={gearPath(8, 7, 4.500, 7)} fill="#d9262c" /><Gear cx={16} cy={16} r1={3.500} r2={5.500} fill="#8aa9d6" hole={1.500} /><path d="M7 15h15l-7 7z" fill="#444" /></Ico>
            <Ico s={20}><g transform="scale(.85)">{ico.python}</g><path d="M7 15h15l-7 7z" fill="#444" /></Ico>
            <Ico n="clock" s={20} />
            <Ico s={20}><Page x={5} y={1} w={15} h={22} stroke="#aaa" /><path d="M8 11h9M8 14h9M8 17h9" stroke="#bbb" /></Ico>
            <SepMini />
            <Ico s={20}><path d="M3 3h14l3 3v12h-7l-3 5-1-5H3z" fill="#f4d94e" stroke="#c4a825" /></Ico>
            <SepMini />
            <Ico s={20}><path d="M4 2a4 4 0 0 0 1 7l12 13 3-3L8 6a4 4 0 0 0-4-4z" fill="#bdbdbd" stroke="#777" /><path d="M17 22l3-3 2 2-3 3z" fill="#d8a330" /></Ico>
          </DockTools>
          <SearchBox><Ico n="lensGray" s={15} />Buscar...</SearchBox>
          <ProcTree>
            <ProcList>
              {procItems.map(([ic, t]) => (
                <ProcRow key={t}>
                  <Tri />
                  {ic ? <ProcIcon><Ico s={ic === 'twopages' ? 26 : 24}>{ic === 'q' ? <Qlogo /> : ico[ic]}</Ico></ProcIcon> : <ProcPlain />}
                  <span>{t}</span>
                </ProcRow>
              ))}
            </ProcList>
            <VScroll>
              <ScrollArrow><CaretUp /></ScrollArrow>
              <ScrollTrack><ScrollThumb /></ScrollTrack>
              <ScrollArrow><Caret $c="#606060" /></ScrollArrow>
            </VScroll>
          </ProcTree>
        </RightDock>
      </Workspace>
      <StatusBar>
        <Locator><Ico n="lensGray" s={14} />Escreva para localizar (Ctrl+K)</Locator>
        <StatLabel $w={86} $ml={382}>Coordenada</StatLabel>
        <StatField $w={136} $ml={2}>589600,7799418</StatField>
        <IconSlot $ml={6}><Ico n="mouse" s={25} /></IconSlot>
        <StatLabel $w={48} $ml={11}>Escala</StatLabel>
        <StatField $w={112}><StatFieldText>1:234285</StatFieldText><ComboBtn><Caret /></ComboBtn></StatField>
        <IconSlot $ml={10}><Ico n="lock" s={24} /></IconSlot>
        <StatLabel $w={37} $ml={8}>Lupa</StatLabel>
        <Spin w={104}>100%</Spin>
        <StatLabel $w={66} $ml={10}>Rotação</StatLabel>
        <Spin w={99}>0,0 °</Spin>
        <CheckBox $ml={6}><Tick /></CheckBox>
        <StatLabel $w={91} $ml={9}>Renderizar</StatLabel>
        <IconSlot $ml={1}><Ico n="gridGlobe" s={24} /></IconSlot>
        <StatLabel $w={137} $ml={5}>SRC desconhecido</StatLabel>
        <IconSlot $ml={15}><Ico n="chat" s={26} /></IconSlot>
        <IconSlot $ml={13}><Ico n="plugin" s={24} /></IconSlot>
      </StatusBar>
      <TaskBar>
        {taskCells.map(([x, k, m]) => {
          const w = 46;
          const gap = cellFor(x, w);
          return (
            <TaskCell key={k} $w={w} $gap={gap} $on={k === 'Q'}>
              {k === 'Q' ? <Logo s={30} /> : <T>{task[k]}</T>}
              {m || k === 'Q' ? <TaskMark /> : null}
            </TaskCell>
          );
        })}
        {tray.map(([x, k, s]) => {
          const w = 34;
          const gap = cellFor(x, w);
          return <TaskCell key={k} $w={w} $gap={gap}><T s={s}>{task[k]}</T></TaskCell>;
        })}
        <TaskCell $w={50} $gap={cellFor(1749, 50)}>ENG</TaskCell>
        <TaskCell $w={60} $gap={cellFor(1808, 60)}>10:58</TaskCell>
        <TaskCell $w={40} $gap={cellFor(1869, 40)}><T>{task.note}</T></TaskCell>
      </TaskBar>
      <CtxMenu>
        {ctx.map((c, i) => c === 's' ? <CtxSep key={i} /> : (
          <CtxItem key={i} $off={c[2] === 'off'}>
            <CtxIcon>
              {c[0] === 'box' ? <CtxBox /> : c[0] ? <Ico n={c[0]} s={25} /> : null}
            </CtxIcon>
            <span>{c[1]}</span>
            {c[2] === 'sub' ? <CtxArrow /> : null}
          </CtxItem>
        ))}
      </CtxMenu>
    </Screen>
  );
}
